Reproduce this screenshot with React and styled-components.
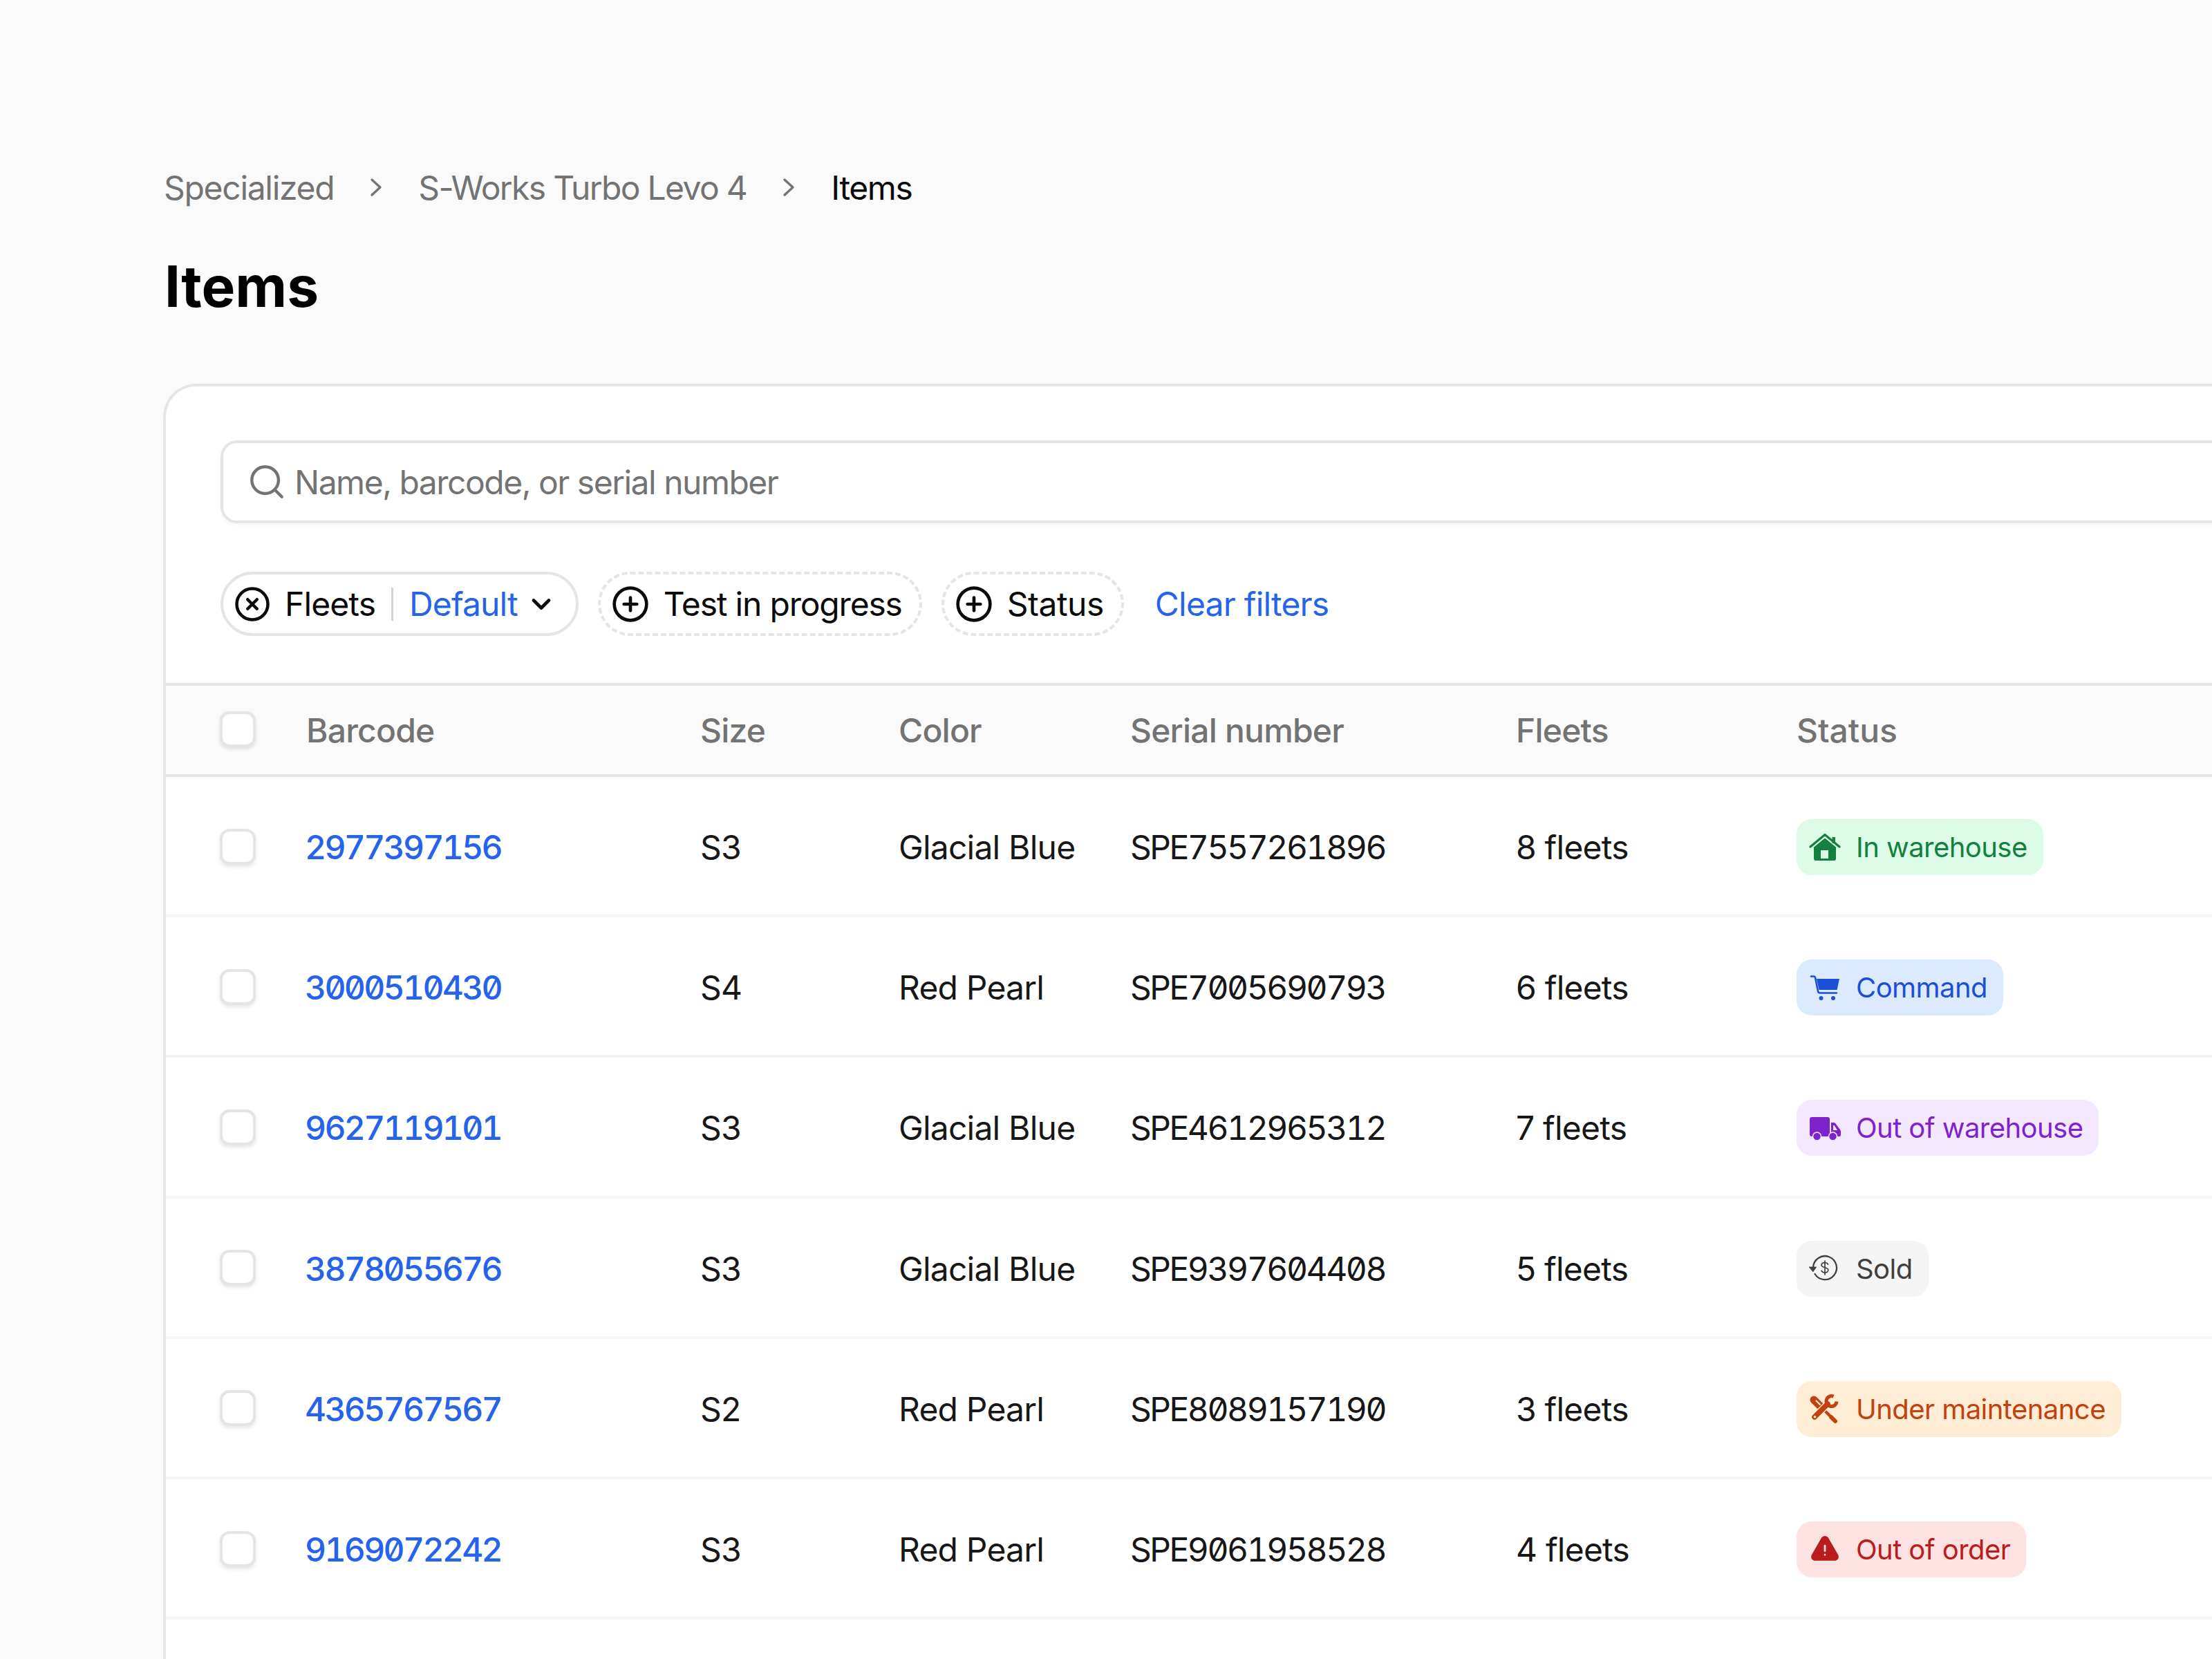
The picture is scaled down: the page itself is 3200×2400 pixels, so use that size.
import React from 'react';
import styled, { createGlobalStyle } from 'styled-components';
import { Search, CirclePlus, CircleX, ChevronDown } from 'lucide-react';
import { HiExclamationTriangle } from 'react-icons/hi2';

const GlobalStyle = createGlobalStyle`
  html, body {
    margin: 0;
    background: #fafafa;
    font-family: Inter, "Liberation Sans", sans-serif;
    color: #0a0a0a;
    overflow: hidden;
  }
  * { box-sizing: border-box; }
`;

const Page = styled.div`
  width: 3200px;
  height: 2400px;
  overflow: hidden;
  padding: 235px 0 0 236px;
`;

const Breadcrumbs = styled.nav`
  display: flex;
  align-items: center;
  gap: 51px;
  height: 72px;
  font-size: 48px;
  padding-left: 1px;
`;

const Crumb = styled.span`
  letter-spacing: ${(p) => p.$tracking};
  color: ${(p) => (p.$current ? '#0a0a0a' : '#737373')};
`;

const Title = styled.h1`
  margin: 60px 0 0 2px;
  font-size: 82px;
  line-height: 96px;
  font-weight: 700;
  color: #000;
`;

const Card = styled.section`
  width: 3400px;
  min-height: 2000px;
  margin-top: 92px;
  background: #fff;
  border: 4px solid #e5e5e5;
  border-right: none;
  border-radius: 48px 0 0 0;
`;

const Controls = styled.div`
  padding: 78px 0 68px 79px;
`;

const SearchBox = styled.div`
  display: flex;
  align-items: center;
  gap: 11px;
  width: 3200px;
  height: 120px;
  padding-left: 34px;
  margin-bottom: 70px;
  border: 4px solid #e5e5e5;
  border-radius: 24px;
  box-shadow: 0 2px 4px rgba(0, 0, 0, 0.05);
  font-size: 48px;
  letter-spacing: -1.5px;
  color: #737373;
`;

const Filters = styled.div`
  display: flex;
  align-items: center;
  gap: 28px;
`;

const Pill = styled.div`
  display: flex;
  align-items: center;
  height: 93px;
  padding: 0 25px 0 15px;
  border: 4px ${(p) => (p.$dashed ? 'dashed' : 'solid')} #e5e5e5;
  border-radius: 47px;
  font-size: 48px;
  letter-spacing: ${(p) => p.$tracking || '-1.2px'};
  color: #0a0a0a;

  & > svg:first-child {
    margin-right: 20px;
  }
`;

const PillDivider = styled.span`
  width: 3px;
  height: 48px;
  margin: 0 23px;
  background: #d4d4d4;
`;

const PillValue = styled.span`
  color: #2563eb;
  margin-right: 12px;
`;

const PillCaret = styled(ChevronDown)`
  margin-right: 3px;
`;

const HeadLabel = styled.span`
  letter-spacing: ${(p) => p.$tracking};
`;

const ClearLink = styled.a`
  margin-left: 17px;
  font-size: 48px;
  letter-spacing: -0.8px;
  color: #2563eb;
`;

const Cols = `
  display: grid;
  grid-template-columns: 125px 570px 287px 335px 558px 406px 1fr;
  align-items: center;
  padding-left: 78px;
`;

const HeadRow = styled.div`
  ${Cols}
  height: 136px;
  background: #fafafa;
  border-top: 4px solid #e5e5e5;
  border-bottom: 4px solid #e5e5e5;
  font-size: 48px;
  font-weight: 500;
  letter-spacing: -0.8px;
  color: #737373;
`;

const Row = styled.div`
  ${Cols}
  height: 203.2px;
  padding-top: 4px;
  border-bottom: 4px solid #f5f5f5;
  font-size: 48px;
  letter-spacing: -0.8px;
  color: #171717;
`;

const Checkbox = styled.span`
  display: block;
  width: 52px;
  height: 52px;
  margin-top: -2px;
  background: #fff;
  border: 4px solid #e5e5e5;
  border-radius: 14px;
  box-shadow: 0 3px 5px rgba(0, 0, 0, 0.1);
`;

const Mono = styled.span`
  font-feature-settings: 'tnum', 'zero';
  letter-spacing: -2.5px;
`;

const Barcode = styled(Mono)`
  margin-left: -2px;
  color: #2563eb;
  font-weight: 500;
  letter-spacing: -2.7px;
`;

const Badge = styled.span`
  display: inline-flex;
  align-items: center;
  gap: 22px;
  height: 81px;
  padding: 0 23px 0 18px;
  border-radius: 22px;
  font-size: 40px;
  letter-spacing: -0.55px;
  background: ${(p) => p.$bg};
  color: ${(p) => p.$fg};
`;

const BadgeIcon = styled.span`
  display: flex;
  align-items: center;
  justify-content: center;
  width: 46px;
  height: 46px;
  font-size: 46px;
`;

const HouseIcon = () => (
  <svg width="46" height="46" viewBox="9 6 46 46" fill="currentColor">
    <path d="M11 28 L32 10.5 L53 28" fill="none" stroke="currentColor" strokeWidth="3.2" strokeLinecap="round" strokeLinejoin="round" />
    <rect x="42.5" y="14" width="4.5" height="9" />
    <path fillRule="evenodd" d="M16 28.5 L32 15.5 L48 28.5 V45 a3 3 0 0 1 -3 3 H19 a3 3 0 0 1 -3 -3 Z M26 33 V45 H37 V33 Z" />
  </svg>
);

const CartIcon = () => (
  <svg width="46" height="46" viewBox="0 0 46 46" fill="currentColor">
    <path d="M3 6.5 h4 q1.5 0 2 1.5 l4 20 q.5 2.5 3 2.5 h24" fill="none" stroke="currentColor" strokeWidth="2.6" strokeLinecap="round" strokeLinejoin="round" />
    <path d="M11 10 H44 L40.5 26 H14.5 Z" />
    <circle cx="17.5" cy="38" r="3" />
    <circle cx="35" cy="38" r="3" />
  </svg>
);

const TruckIcon = ({ bg }) => (
  <svg width="46" height="46" viewBox="0 0 46 46" fill="currentColor">
    <rect x="1" y="7" width="29" height="28" rx="3" />
    <path fillRule="evenodd" d="M32 15 h4 q1.5 0 2.5 1.5 l6 8 q1.5 1.5 1.5 3.5 v5 a2 2 0 0 1 -2 2 H32 Z M35 19 v7 h6 l-4.5 -7 Z" />
    <circle cx="11.5" cy="35" r="6" stroke={bg} strokeWidth="1.6" />
    <circle cx="34.5" cy="35" r="6" stroke={bg} strokeWidth="1.6" />
  </svg>
);

const SoldIcon = () => (
  <svg width="46" height="46" viewBox="9 5.5 46 46" fill="none" stroke="currentColor" strokeWidth="2.3" strokeLinecap="round" strokeLinejoin="round">
    <path d="M15 27 A17 17 0 1 1 17.5 36.5" />
    <path d="M9.5 26.5 H19.5 L15 33 Z" fill="currentColor" strokeWidth="1" />
    <path d="M36.5 22.5 c-.8-1.6-2.6-2.5-4.6-2.5 -2.8 0-4.9 1.5-4.9 3.6 0 4.6 9.8 2.6 9.8 7.2 0 2.2-2.2 3.7-5 3.7 -2.2 0-4-1-4.8-2.6 M32 17.5 v20" strokeWidth="1.7" />
  </svg>
);

const ToolsIcon = ({ bg }) => (
  <svg width="46" height="46" viewBox="9 5 46 46" fill="none" stroke="currentColor" strokeLinecap="round" strokeLinejoin="round">
    <path d="M16 15 L25 24" strokeWidth="11" />
    <path d="M19.5 16.5 L25 22" stroke={bg} strokeWidth="2.2" />
    <path d="M26 25 L44 43" strokeWidth="4.2" />
    <path d="M41 40 L47 46" strokeWidth="6" />
    <path d="M17 40 L36 21" stroke={bg} strokeWidth="10.5" />
    <path d="M17 40 L36 21" strokeWidth="7.5" />
    <path d="M44.5 10.2 A7.5 7.5 0 1 0 49 17.5" strokeWidth="5" strokeLinecap="butt" />
    <circle cx="17.5" cy="39.8" r="1.8" fill={bg} stroke="none" />
  </svg>
);

const STATUS = {
  warehouse: { label: 'In warehouse', bg: '#dcfce7', fg: '#15803d', Icon: HouseIcon },
  command: { label: 'Command', bg: '#dbeafe', fg: '#1d4ed8', Icon: CartIcon },
  out: { label: 'Out of warehouse', bg: '#f3e8ff', fg: '#7e22ce', Icon: TruckIcon },
  sold: { label: 'Sold', bg: '#f5f5f5', fg: '#404040', Icon: SoldIcon },
  maintenance: { label: 'Under maintenance', bg: '#ffedd5', fg: '#c2410c', Icon: ToolsIcon },
  broken: { label: 'Out of order', bg: '#fee2e2', fg: '#b91c1c', Icon: HiExclamationTriangle },
};

const items = [
  { barcode: '2977397156', size: 'S3', color: 'Glacial Blue', serial: 'SPE7557261896', fleets: '8 fleets', status: 'warehouse' },
  { barcode: '3000510430', size: 'S4', color: 'Red Pearl', serial: 'SPE7005690793', fleets: '6 fleets', status: 'command' },
  { barcode: '9627119101', size: 'S3', color: 'Glacial Blue', serial: 'SPE4612965312', fleets: '7 fleets', status: 'out' },
  { barcode: '3878055676', size: 'S3', color: 'Glacial Blue', serial: 'SPE9397604408', fleets: '5 fleets', status: 'sold' },
  { barcode: '4365767567', size: 'S2', color: 'Red Pearl', serial: 'SPE8089157190', fleets: '3 fleets', status: 'maintenance' },
  { barcode: '9169072242', size: 'S3', color: 'Red Pearl', serial: 'SPE9061958528', fleets: '4 fleets', status: 'broken' },
];

const Chevron = () => (
  <svg width="20" height="28" viewBox="0 0 20 28" fill="none" stroke="#737373" strokeWidth="3.4" strokeLinecap="round" strokeLinejoin="round">
    <path d="M4 3 L16 14 L4 25" />
  </svg>
);

export default function App() {
  return (
    <Page>
      <GlobalStyle />
      <Breadcrumbs>
        <Crumb $tracking="-1.3px">Specialized</Crumb>
        <Chevron />
        <Crumb $tracking="-1.65px">S-Works Turbo Levo 4</Crumb>
        <Chevron />
        <Crumb $current $tracking="-1.4px">Items</Crumb>
      </Breadcrumbs>
      <Title>Items</Title>
      <Card>
        <Controls>
          <SearchBox>
            <Search size={58} strokeWidth={1.8} />
            Name, barcode, or serial number
          </SearchBox>
          <Filters>
            <Pill $tracking="-0.9px">
              <CircleX size={54} strokeWidth={2} />
              Fleets
              <PillDivider />
              <PillValue>Default</PillValue>
              <PillCaret size={44} strokeWidth={2.6} />
            </Pill>
            <Pill $dashed>
              <CirclePlus size={56} strokeWidth={2} />
              Test in progress
            </Pill>
            <Pill $dashed $tracking="-0.5px">
              <CirclePlus size={56} strokeWidth={2} />
              Status
            </Pill>
            <ClearLink>Clear filters</ClearLink>
          </Filters>
        </Controls>
        <HeadRow>
          <Checkbox />
          <span>Barcode</span>
          <span>Size</span>
          <span>Color</span>
          <span>Serial number</span>
          <span>Fleets</span>
          <HeadLabel $tracking="0">Status</HeadLabel>
        </HeadRow>
        {items.map((item) => {
          const s = STATUS[item.status];
          return (
            <Row key={item.barcode}>
              <Checkbox />
              <Barcode>{item.barcode}</Barcode>
              <span>{item.size}</span>
              <span>{item.color}</span>
              <Mono>{item.serial}</Mono>
              <span>{item.fleets}</span>
              <span>
                <Badge $bg={s.bg} $fg={s.fg}>
                  <BadgeIcon>
                    <s.Icon bg={s.bg} />
                  </BadgeIcon>
                  {s.label}
                </Badge>
              </span>
            </Row>
          );
        })}
      </Card>
    </Page>
  );
}
